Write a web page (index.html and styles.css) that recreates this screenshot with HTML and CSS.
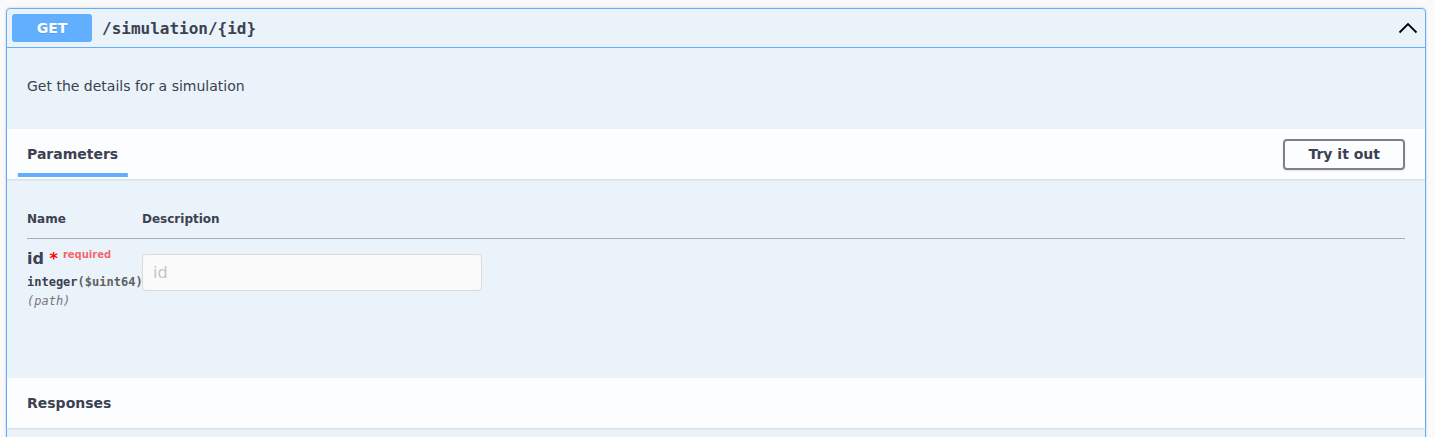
FILE: index.html
```html
<!DOCTYPE html>
<html>
<head>
<meta charset="utf-8">
<link rel="stylesheet" href="styles.css">
</head>
<body>
<div class="opblock">
  <div class="summary">
    <span class="method">GET</span>
    <span class="path">/simulation/{id}</span>
    <svg class="arrow" width="20" height="20" viewBox="0 0 20 20"><polyline points="1.5,14.5 10,6 18.5,14.5" fill="none" stroke="#000" stroke-width="1.8"/></svg>
  </div>
  <div class="body">
    <div class="desc"><p>Get the details for a simulation</p></div>
    <div class="section-header">
      <div class="tab"><h4><span>Parameters</span></h4></div>
      <button class="try">Try it out</button>
    </div>
    <div class="table-container">
      <table class="parameters">
        <thead>
          <tr><th class="col-name">Name</th><th>Description</th></tr>
        </thead>
        <tbody>
          <tr>
            <td class="col-name">
              <div class="pname">id<span class="star">&nbsp;*</span><span class="req">required</span></div>
              <div class="ptype">integer<span class="fmt">($uint64)</span></div>
              <div class="pin">(path)</div>
            </td>
            <td class="col-desc"><input type="text" placeholder="id" disabled></td>
          </tr>
        </tbody>
      </table>
    </div>
    <div class="section-header resp">
      <h4>Responses</h4>
    </div>
  </div>
</div>
</body>
</html>
```
FILE: styles.css
```css
html, body { margin: 0; padding: 0; }
body {
  background: #fafafa;
  font-family: "DejaVu Sans", sans-serif;
  color: #3b4151;
  padding: 8px 9px 0 6px;
}
.opblock {
  border: 1px solid #61affe;
  border-radius: 4px;
  background: rgba(97,175,254,.1);
  box-shadow: 0 0 3px rgba(0,0,0,.19);
  min-height: 600px;
}
.summary {
  display: flex;
  align-items: center;
  padding: 5px;
  border-bottom: 1px solid #61affe;
}
.method {
  min-width: 80px;
  padding: 6px 0;
  font-size: 14px;
  line-height: 16px;
  font-weight: 700;
  text-align: center;
  color: #fff;
  background: #61affe;
  border-radius: 3px;
  text-shadow: 0 1px 0 rgba(0,0,0,.1);
}
.path {
  flex: 1;
  padding: 0 10px;
  font-family: "DejaVu Sans Mono", monospace;
  font-size: 16px;
  font-weight: 600;
  color: #3b4151;
}
.arrow { margin-right: 2px; }
.desc { padding: 15px 20px; margin: 0 0 5px; }
.desc p { margin: 14px 0; font-size: 14px; line-height: 18px; }
.section-header {
  display: flex;
  align-items: center;
  justify-content: space-between;
  min-height: 50px;
  box-sizing: border-box;
  padding: 8px 20px;
  background: rgba(255,255,255,.8);
  box-shadow: 0 1px 2px rgba(0,0,0,.1);
}
.section-header h4 { margin: 0; font-size: 14px; font-weight: 700; }
.tab h4 span { position: relative; }
.tab h4 span::after {
  content: "";
  position: absolute;
  left: 50%;
  bottom: -15px;
  width: 121%;
  height: 4px;
  transform: translateX(-50%);
  background: #61affe;
}
.try {
  font-family: "DejaVu Sans", sans-serif;
  font-size: 14px;
  font-weight: 700;
  color: #3b4151;
  background: transparent;
  border: 2px solid gray;
  border-radius: 4px;
  padding: 5px 23px;
  line-height: 17px;
  box-shadow: 0 1px 2px rgba(0,0,0,.1);
}
.table-container { padding: 20px; height: 159px; }
.parameters { width: 100%; border-collapse: collapse; table-layout: fixed; }
.parameters th {
  text-align: left;
  font-size: 12px;
  font-weight: 700;
  padding: 13px 0 12px;
  line-height: 14px;
  border-bottom: 1px solid rgba(59,65,81,.2);
}
.parameters .col-name { width: 115px; }
.parameters td { vertical-align: top; padding: 10px 0; }
.pname { font-size: 16px; font-weight: 700; line-height: 19px; }
.star { color: red; }
.req {
  color: rgba(255,0,0,.6);
  font-size: 10px;
  position: relative;
  top: -6px;
  padding: 5px;
}
.ptype {
  font-family: "DejaVu Sans Mono", monospace;
  font-size: 12px;
  font-weight: 600;
  padding: 5px 0;
  line-height: 14px;
  white-space: nowrap;
}
.fmt { color: #606060; }
.pin {
  font-family: "DejaVu Sans Mono", monospace;
  font-size: 12px;
  font-style: italic;
  font-weight: 300;
  color: #777;
  line-height: 14px;
}
.col-desc input {
  width: 340px;
  box-sizing: border-box;
  margin: 5px 0;
  padding: 8px 10px;
  font-family: "DejaVu Sans", sans-serif;
  font-size: 16px;
  line-height: 19px;
  border: 1px solid #d9d9d9;
  border-radius: 4px;
  background: #fafafa;
}
.col-desc input::placeholder { color: #c4c4c4; }
```
